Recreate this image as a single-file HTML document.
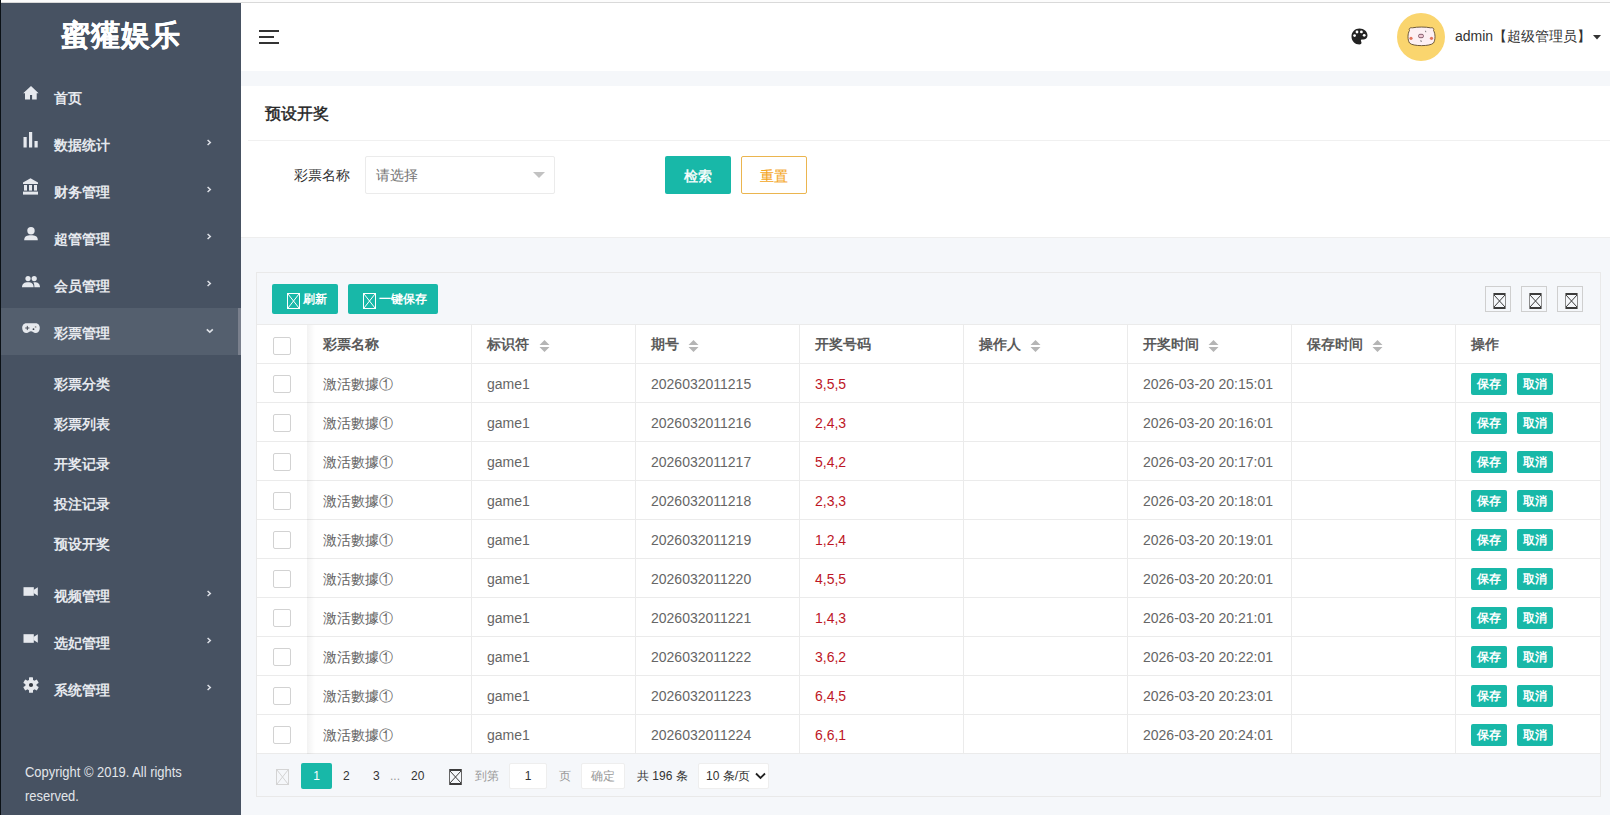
<!DOCTYPE html>
<html><head><meta charset="utf-8">
<style>
*{margin:0;padding:0;box-sizing:border-box;}
html,body{width:1610px;height:815px;overflow:hidden;background:#f5f7fa;font-family:"Liberation Sans",sans-serif;font-size:14px;color:#333;position:relative;}
.abs{position:absolute;}
.t{position:absolute;white-space:nowrap;}
.topline{position:absolute;left:0;top:0;width:1610px;height:3px;background:#fcfcfc;border-bottom:1px solid #d9d9d9;}
.leftline{position:absolute;left:0;top:0;width:1px;height:815px;background:#0b1116;z-index:5;}
.side{position:absolute;left:0;top:3px;width:241px;height:812px;background:#475262;}
.logo{position:absolute;left:0;top:15px;width:241px;height:40px;text-align:center;color:#fff;font-size:29px;line-height:40px;font-weight:bold;letter-spacing:1px;text-indent:1px;}
.mi{position:absolute;left:54px;height:20px;line-height:20px;font-size:14px;font-weight:bold;white-space:nowrap;color:#e6e9ee;}
.header{position:absolute;left:241px;top:3px;width:1369px;height:68px;background:#fff;}
.card1{position:absolute;left:241px;top:86px;width:1369px;height:152px;background:#fff;border-bottom:1px solid #eeeeee;}
.btn{position:absolute;background:#18b8a8;color:#fff;border-radius:2px;text-align:center;white-space:nowrap;}
.tbl{position:absolute;left:256px;top:272px;width:1345px;height:525px;border:1px solid #e9e9e9;background:#f5f7fa;}
.hd{position:absolute;font-weight:bold;color:#5a5a5a;font-size:14px;line-height:20px;white-space:nowrap;}
.cell{position:absolute;color:#666;font-size:14px;line-height:20px;white-space:nowrap;}
.red{color:#bd1626;}
.cb{position:absolute;left:273px;width:18px;height:18px;border:1px solid #d2d2d2;border-radius:2px;background:#fff;}
.sbtn{position:absolute;width:36px;height:22px;line-height:22px;font-size:12px;font-weight:bold;background:#18b8a8;color:#fff;border-radius:2px;text-align:center;}
</style></head>
<body>
<div class="topline"></div>
<div class="side"></div>
<div class="abs" style="left:0;top:308px;width:241px;height:47px;background:#545f6e;"></div>
<div class="abs" style="left:238px;top:308px;width:3px;height:47px;background:#7a808d;"></div>
<div class="logo" style="top:15px;font-weight:bold;-webkit-text-stroke:0.3px #fff;">蜜獾娱乐</div>
<div class="mi" style="top:88px;">首页</div>
<svg class="abs" style="left:23px;top:86px" width="16" height="15" viewBox="0 0 16 15"><path d="M8 0 L15.6 7.2 L13.7 7.2 L13.7 13.6 L9.1 13.6 L9.1 9 L7 9 L7 13.6 L2 13.6 L2 7.2 L0.2 7.2 Z" fill="#e6e9ee"/></svg>
<div class="mi" style="top:135px;">数据统计</div>
<svg class="abs" style="left:23px;top:132px" width="16" height="16" viewBox="0 0 16 16"><rect x="0.5" y="5" width="3.2" height="10.5" fill="#e6e9ee"/><rect x="6" y="0" width="3.2" height="15.5" fill="#e6e9ee"/><rect x="11.5" y="9" width="3.2" height="6.5" fill="#e6e9ee"/></svg>
<svg class="abs" style="left:206px;top:139px" width="7" height="7" viewBox="0 0 7 7"><path d="M1.6 1 L4.3 3.5 L1.6 6" stroke="#dde0e6" stroke-width="1.5" fill="none"/></svg>
<div class="mi" style="top:182px;">财务管理</div>
<svg class="abs" style="left:22px;top:178px" width="17" height="17" viewBox="0 0 17 17"><path d="M8.5 0.3 L16 4.5 L16 6 L1 6 L1 4.5 Z" fill="#e6e9ee"/><rect x="2" y="7" width="3" height="5.6" fill="#e6e9ee"/><rect x="7" y="7" width="3" height="5.6" fill="#e6e9ee"/><rect x="12" y="7" width="3" height="5.6" fill="#e6e9ee"/><rect x="1" y="13.6" width="15" height="3" fill="#e6e9ee"/></svg>
<svg class="abs" style="left:206px;top:186px" width="7" height="7" viewBox="0 0 7 7"><path d="M1.6 1 L4.3 3.5 L1.6 6" stroke="#dde0e6" stroke-width="1.5" fill="none"/></svg>
<div class="mi" style="top:229px;">超管管理</div>
<svg class="abs" style="left:23px;top:227px" width="16" height="14" viewBox="0 0 16 14"><circle cx="8" cy="3.7" r="3.7" fill="#e6e9ee"/><path d="M1.2 13.3 C1.2 9.2 4 8.3 8 8.3 C12 8.3 14.8 9.2 14.8 13.3 Z" fill="#e6e9ee"/></svg>
<svg class="abs" style="left:206px;top:233px" width="7" height="7" viewBox="0 0 7 7"><path d="M1.6 1 L4.3 3.5 L1.6 6" stroke="#dde0e6" stroke-width="1.5" fill="none"/></svg>
<div class="mi" style="top:276px;">会员管理</div>
<svg class="abs" style="left:22px;top:276px" width="19" height="12" viewBox="0 0 19 12"><circle cx="6" cy="2.6" r="2.6" fill="#e6e9ee"/><circle cx="12.2" cy="2.6" r="2.6" fill="#e6e9ee"/><path d="M0 11.3 C0 7.5 2.5 6.2 6 6.2 C9.5 6.2 11.6 7.5 11.6 11.3 Z" fill="#e6e9ee"/><path d="M12.6 6.2 C15.8 6.2 18 7.5 18 11.3 L12.4 11.3 C12.4 9 12.2 7.5 11.2 6.5 Z" fill="#e6e9ee"/></svg>
<svg class="abs" style="left:206px;top:280px" width="7" height="7" viewBox="0 0 7 7"><path d="M1.6 1 L4.3 3.5 L1.6 6" stroke="#dde0e6" stroke-width="1.5" fill="none"/></svg>
<div class="mi" style="top:323px;">彩票管理</div>
<svg class="abs" style="left:22px;top:323px" width="18" height="11" viewBox="0 0 18 11"><path d="M4.5 0.2 L13.5 0.2 C16.5 0.2 17.8 2.5 17.8 5 C17.8 8 16 10 13.5 10 C11.5 10 10.5 8.3 9 8.3 C7.5 8.3 6.5 10 4.5 10 C2 10 0.2 8 0.2 5 C0.2 2.5 1.5 0.2 4.5 0.2 Z" fill="#e6e9ee"/><path d="M3.2 5 L7.4 5 M5.3 2.9 L5.3 7.1" stroke="#3a404a" stroke-width="0.9"/><circle cx="11.5" cy="6.2" r="0.9" fill="#3a404a"/><circle cx="13.6" cy="3.9" r="0.9" fill="#999"/></svg>
<svg class="abs" style="left:206px;top:328px" width="8" height="6" viewBox="0 0 8 6"><path d="M0.8 1.3 L3.8 4.2 L6.8 1.3" stroke="#dde0e6" stroke-width="1.6" fill="none"/></svg>
<div class="mi" style="top:586px;">视频管理</div>
<svg class="abs" style="left:23px;top:587px" width="16" height="10" viewBox="0 0 16 10"><rect x="0.5" y="0.2" width="10.3" height="8.6" fill="#e6e9ee"/><path d="M10.5 3 L14.8 0.2 L14.8 8.8 L10.5 6 Z" fill="#e6e9ee"/></svg>
<svg class="abs" style="left:206px;top:590px" width="7" height="7" viewBox="0 0 7 7"><path d="M1.6 1 L4.3 3.5 L1.6 6" stroke="#dde0e6" stroke-width="1.5" fill="none"/></svg>
<div class="mi" style="top:633px;">选妃管理</div>
<svg class="abs" style="left:23px;top:634px" width="16" height="10" viewBox="0 0 16 10"><rect x="0.5" y="0.2" width="10.3" height="8.6" fill="#e6e9ee"/><path d="M10.5 3 L14.8 0.2 L14.8 8.8 L10.5 6 Z" fill="#e6e9ee"/></svg>
<svg class="abs" style="left:206px;top:637px" width="7" height="7" viewBox="0 0 7 7"><path d="M1.6 1 L4.3 3.5 L1.6 6" stroke="#dde0e6" stroke-width="1.5" fill="none"/></svg>
<div class="mi" style="top:680px;">系统管理</div>
<svg class="abs" style="left:23px;top:677px" width="16" height="16" viewBox="0 0 16 16"><g fill="#e6e9ee"><circle cx="8" cy="8" r="5.6"/><rect x="6" y="0.2" width="4" height="15.6" rx="0.6"/><rect x="6" y="0.2" width="4" height="15.6" rx="0.6" transform="rotate(60 8 8)"/><rect x="6" y="0.2" width="4" height="15.6" rx="0.6" transform="rotate(120 8 8)"/></g><circle cx="8" cy="8" r="2.1" fill="#353a42"/></svg>
<svg class="abs" style="left:206px;top:684px" width="7" height="7" viewBox="0 0 7 7"><path d="M1.6 1 L4.3 3.5 L1.6 6" stroke="#dde0e6" stroke-width="1.5" fill="none"/></svg>
<div class="mi" style="top:374px;">彩票分类</div>
<div class="mi" style="top:414px;">彩票列表</div>
<div class="mi" style="top:454px;">开奖记录</div>
<div class="mi" style="top:494px;">投注记录</div>
<div class="mi" style="top:534px;">预设开奖</div>
<div class="t" style="left:25px;top:760px;font-size:14px;line-height:24px;color:#e3e6ea;transform:scaleX(0.923);transform-origin:0 0;">Copyright © 2019. All rights</div>
<div class="t" style="left:25px;top:784px;font-size:14px;line-height:24px;color:#e3e6ea;transform:scaleX(0.923);transform-origin:0 0;">reserved.</div>
<div class="leftline"></div>
<div class="header"></div>
<div class="abs" style="left:259px;top:30px;width:20px;height:2px;background:#333;"></div>
<div class="abs" style="left:259px;top:36px;width:15px;height:2px;background:#333;"></div>
<div class="abs" style="left:259px;top:42px;width:20px;height:2px;background:#333;"></div>
<svg class="abs" style="left:1351px;top:28px" width="17" height="17" viewBox="0 0 17 17"><path d="M8.5 0.5 C13 0.5 16.5 3.6 16.5 7.5 C16.5 10.3 14.4 11.6 12.4 11.6 L11 11.6 C10.2 11.6 9.7 12.3 9.9 13 C10.1 13.6 10.5 14 10.5 14.8 C10.5 15.8 9.7 16.5 8.5 16.5 C4 16.5 0.5 13 0.5 8.5 C0.5 4 4 0.5 8.5 0.5 Z" fill="#222"/><circle cx="3.6" cy="7.6" r="1.4" fill="#fff"/><circle cx="6" cy="4" r="1.4" fill="#fff"/><circle cx="10.4" cy="3.9" r="1.4" fill="#fff"/><circle cx="13.2" cy="7.3" r="1.4" fill="#fff"/></svg>
<div class="abs" style="left:1397px;top:13px;width:48px;height:48px;border-radius:50%;background:#fad56e;"></div>
<svg class="abs" style="left:1406px;top:26px" width="31" height="21" viewBox="0 0 31 21"><path d="M3.5 4.5 C2.5 2.5 4 1.5 6.5 1.8 C11 0.8 20 0.8 24.5 1.8 C27 1.5 28.5 2.5 27.5 4.5 C29.5 7.5 29.5 14 27.5 17 C24.5 20.5 6.5 20.5 3.5 17 C1.5 14 1.5 7.5 3.5 4.5 Z" fill="#fdf0f3" stroke="#5e4a2e" stroke-width="0.9"/><circle cx="5" cy="12.3" r="1.6" fill="#e3735c"/><circle cx="25.5" cy="12.3" r="1.6" fill="#e3735c"/><rect x="12.6" y="8.3" width="4.8" height="3.4" rx="1.3" fill="#f0c8d2" stroke="#6a4050" stroke-width="0.8"/><path d="M19.5 4.8 L19.8 6.2" stroke="#444" stroke-width="0.7"/><path d="M14.8 14.2 L15.3 16" stroke="#444" stroke-width="0.7"/></svg>
<div class="t" style="left:1455px;top:26px;font-size:14px;line-height:20px;color:#333;">admin【超级管理员】</div>
<svg class="abs" style="left:1593px;top:35px" width="8" height="5" viewBox="0 0 8 5"><path d="M0 0 L8 0 L4 4.5 Z" fill="#333"/></svg>
<div class="card1"></div>
<div class="t" style="left:265px;top:104px;font-size:16px;line-height:20px;color:#222;font-weight:normal;-webkit-text-stroke:0.4px #222;">预设开奖</div>
<div class="abs" style="left:248px;top:140px;width:1362px;height:1px;background:#f0f0f0;"></div>
<div class="t" style="left:294px;top:165px;font-size:14px;line-height:20px;color:#333;">彩票名称</div>
<div class="abs" style="left:365px;top:156px;width:190px;height:38px;border:1px solid #ebebeb;background:#fff;border-radius:2px;"></div>
<div class="t" style="left:376px;top:165px;font-size:14px;line-height:20px;color:#757575;">请选择</div>
<svg class="abs" style="left:533px;top:172px" width="12" height="6" viewBox="0 0 12 6"><path d="M0 0 L12 0 L6 6 Z" fill="#c2c2c2"/></svg>
<div class="btn" style="left:665px;top:156px;width:66px;height:38px;line-height:40px;font-size:14px;-webkit-text-stroke:0.4px #fff;">检索</div>
<div class="abs" style="left:741px;top:156px;width:66px;height:38px;line-height:38px;border:1px solid #ebb54f;border-radius:2px;background:#fff;color:#f4a522;text-align:center;font-size:14px;-webkit-text-stroke:0.1px #f4a522;">重置</div>
<div class="tbl"></div>
<div class="btn" style="left:272px;top:284px;width:66px;height:30px;"></div>
<svg class="abs" style="left:287px;top:293px;" width="13" height="16" viewBox="0 0 13 16"><g shape-rendering="crispEdges"><rect x="0" y="0" width="13" height="1" fill="#fff"/><rect x="0" y="15" width="13" height="1" fill="#fff"/><rect x="0" y="0" width="1" height="16" fill="#fff"/><rect x="12" y="0" width="1" height="16" fill="#fff"/></g><path d="M1 1 L12 15 M12 1 L1 15" stroke="#fff" stroke-width="1"/></svg>
<div class="t" style="left:303px;top:291px;font-size:12px;line-height:16px;color:#fff;font-weight:bold;">刷新</div>
<div class="btn" style="left:348px;top:284px;width:90px;height:30px;"></div>
<svg class="abs" style="left:363px;top:293px;" width="13" height="16" viewBox="0 0 13 16"><g shape-rendering="crispEdges"><rect x="0" y="0" width="13" height="1" fill="#fff"/><rect x="0" y="15" width="13" height="1" fill="#fff"/><rect x="0" y="0" width="1" height="16" fill="#fff"/><rect x="12" y="0" width="1" height="16" fill="#fff"/></g><path d="M1 1 L12 15 M12 1 L1 15" stroke="#fff" stroke-width="1"/></svg>
<div class="t" style="left:379px;top:291px;font-size:12px;line-height:16px;color:#fff;font-weight:bold;">一键保存</div>
<div class="abs" style="left:1485px;top:286px;width:26px;height:26px;border:1px solid #cfcfcf;"></div>
<svg class="abs" style="left:1493px;top:293px;" width="13" height="16" viewBox="0 0 13 16"><g shape-rendering="crispEdges"><rect x="0" y="0" width="13" height="2" fill="#3c3c3c"/><rect x="0" y="14" width="13" height="2" fill="#3c3c3c"/><rect x="0" y="0" width="1" height="16" fill="#8a8a8a"/><rect x="12" y="0" width="1" height="16" fill="#8a8a8a"/></g><path d="M1 2 L12 14 M12 2 L1 14" stroke="#3c3c3c" stroke-width="1"/></svg>
<div class="abs" style="left:1521px;top:286px;width:26px;height:26px;border:1px solid #cfcfcf;"></div>
<svg class="abs" style="left:1529px;top:293px;" width="13" height="16" viewBox="0 0 13 16"><g shape-rendering="crispEdges"><rect x="0" y="0" width="13" height="2" fill="#3c3c3c"/><rect x="0" y="14" width="13" height="2" fill="#3c3c3c"/><rect x="0" y="0" width="1" height="16" fill="#8a8a8a"/><rect x="12" y="0" width="1" height="16" fill="#8a8a8a"/></g><path d="M1 2 L12 14 M12 2 L1 14" stroke="#3c3c3c" stroke-width="1"/></svg>
<div class="abs" style="left:1557px;top:286px;width:26px;height:26px;border:1px solid #cfcfcf;"></div>
<svg class="abs" style="left:1565px;top:293px;" width="13" height="16" viewBox="0 0 13 16"><g shape-rendering="crispEdges"><rect x="0" y="0" width="13" height="2" fill="#3c3c3c"/><rect x="0" y="14" width="13" height="2" fill="#3c3c3c"/><rect x="0" y="0" width="1" height="16" fill="#8a8a8a"/><rect x="12" y="0" width="1" height="16" fill="#8a8a8a"/></g><path d="M1 2 L12 14 M12 2 L1 14" stroke="#3c3c3c" stroke-width="1"/></svg>
<div class="abs" style="left:257px;top:325px;width:1343px;height:429px;background:#fff;"></div>
<div class="abs" style="left:257px;top:324px;width:1343px;height:1px;background:#ebebeb;"></div>
<div class="abs" style="left:257px;top:363px;width:1343px;height:1px;background:#ebebeb;"></div>
<div class="abs" style="left:257px;top:402px;width:1343px;height:1px;background:#ebebeb;"></div>
<div class="abs" style="left:257px;top:441px;width:1343px;height:1px;background:#ebebeb;"></div>
<div class="abs" style="left:257px;top:480px;width:1343px;height:1px;background:#ebebeb;"></div>
<div class="abs" style="left:257px;top:519px;width:1343px;height:1px;background:#ebebeb;"></div>
<div class="abs" style="left:257px;top:558px;width:1343px;height:1px;background:#ebebeb;"></div>
<div class="abs" style="left:257px;top:597px;width:1343px;height:1px;background:#ebebeb;"></div>
<div class="abs" style="left:257px;top:636px;width:1343px;height:1px;background:#ebebeb;"></div>
<div class="abs" style="left:257px;top:675px;width:1343px;height:1px;background:#ebebeb;"></div>
<div class="abs" style="left:257px;top:714px;width:1343px;height:1px;background:#ebebeb;"></div>
<div class="abs" style="left:257px;top:753px;width:1343px;height:1px;background:#ebebeb;"></div>
<div class="abs" style="left:471px;top:325px;width:1px;height:429px;background:#ebebeb;"></div>
<div class="abs" style="left:635px;top:325px;width:1px;height:429px;background:#ebebeb;"></div>
<div class="abs" style="left:799px;top:325px;width:1px;height:429px;background:#ebebeb;"></div>
<div class="abs" style="left:963px;top:325px;width:1px;height:429px;background:#ebebeb;"></div>
<div class="abs" style="left:1127px;top:325px;width:1px;height:429px;background:#ebebeb;"></div>
<div class="abs" style="left:1291px;top:325px;width:1px;height:429px;background:#ebebeb;"></div>
<div class="abs" style="left:1455px;top:325px;width:1px;height:429px;background:#ebebeb;"></div>
<div class="abs" style="left:307px;top:325px;width:8px;height:429px;background:linear-gradient(to right, rgba(0,0,0,0.05), rgba(0,0,0,0));"></div>
<div class="hd" style="left:323px;top:334px;">彩票名称</div>
<div class="hd" style="left:487px;top:334px;">标识符</div>
<div class="hd" style="left:651px;top:334px;">期号</div>
<div class="hd" style="left:815px;top:334px;">开奖号码</div>
<div class="hd" style="left:979px;top:334px;">操作人</div>
<div class="hd" style="left:1143px;top:334px;">开奖时间</div>
<div class="hd" style="left:1307px;top:334px;">保存时间</div>
<div class="hd" style="left:1471px;top:334px;">操作</div>
<svg class="abs" style="left:539px;top:339px" width="11" height="14" viewBox="0 0 11 14"><path d="M0.5 6 L5.5 1 L10.5 6 Z M0.5 8 L5.5 13 L10.5 8 Z" fill="#b5b5b5"/></svg>
<svg class="abs" style="left:688px;top:339px" width="11" height="14" viewBox="0 0 11 14"><path d="M0.5 6 L5.5 1 L10.5 6 Z M0.5 8 L5.5 13 L10.5 8 Z" fill="#b5b5b5"/></svg>
<svg class="abs" style="left:1030px;top:339px" width="11" height="14" viewBox="0 0 11 14"><path d="M0.5 6 L5.5 1 L10.5 6 Z M0.5 8 L5.5 13 L10.5 8 Z" fill="#b5b5b5"/></svg>
<svg class="abs" style="left:1208px;top:339px" width="11" height="14" viewBox="0 0 11 14"><path d="M0.5 6 L5.5 1 L10.5 6 Z M0.5 8 L5.5 13 L10.5 8 Z" fill="#b5b5b5"/></svg>
<svg class="abs" style="left:1372px;top:339px" width="11" height="14" viewBox="0 0 11 14"><path d="M0.5 6 L5.5 1 L10.5 6 Z M0.5 8 L5.5 13 L10.5 8 Z" fill="#b5b5b5"/></svg>
<div class="cb" style="top:337px;"></div>
<div class="cb" style="top:375px;"></div>
<div class="cell" style="left:323px;top:374px;">激活數據①</div>
<div class="cell" style="left:487px;top:374px;">game1</div>
<div class="cell" style="left:651px;top:374px;">2026032011215</div>
<div class="cell red" style="left:815px;top:374px;">3,5,5</div>
<div class="cell" style="left:1143px;top:374px;">2026-03-20 20:15:01</div>
<div class="sbtn" style="left:1471px;top:373px;">保存</div>
<div class="sbtn" style="left:1517px;top:373px;">取消</div>
<div class="cb" style="top:414px;"></div>
<div class="cell" style="left:323px;top:413px;">激活數據①</div>
<div class="cell" style="left:487px;top:413px;">game1</div>
<div class="cell" style="left:651px;top:413px;">2026032011216</div>
<div class="cell red" style="left:815px;top:413px;">2,4,3</div>
<div class="cell" style="left:1143px;top:413px;">2026-03-20 20:16:01</div>
<div class="sbtn" style="left:1471px;top:412px;">保存</div>
<div class="sbtn" style="left:1517px;top:412px;">取消</div>
<div class="cb" style="top:453px;"></div>
<div class="cell" style="left:323px;top:452px;">激活數據①</div>
<div class="cell" style="left:487px;top:452px;">game1</div>
<div class="cell" style="left:651px;top:452px;">2026032011217</div>
<div class="cell red" style="left:815px;top:452px;">5,4,2</div>
<div class="cell" style="left:1143px;top:452px;">2026-03-20 20:17:01</div>
<div class="sbtn" style="left:1471px;top:451px;">保存</div>
<div class="sbtn" style="left:1517px;top:451px;">取消</div>
<div class="cb" style="top:492px;"></div>
<div class="cell" style="left:323px;top:491px;">激活數據①</div>
<div class="cell" style="left:487px;top:491px;">game1</div>
<div class="cell" style="left:651px;top:491px;">2026032011218</div>
<div class="cell red" style="left:815px;top:491px;">2,3,3</div>
<div class="cell" style="left:1143px;top:491px;">2026-03-20 20:18:01</div>
<div class="sbtn" style="left:1471px;top:490px;">保存</div>
<div class="sbtn" style="left:1517px;top:490px;">取消</div>
<div class="cb" style="top:531px;"></div>
<div class="cell" style="left:323px;top:530px;">激活數據①</div>
<div class="cell" style="left:487px;top:530px;">game1</div>
<div class="cell" style="left:651px;top:530px;">2026032011219</div>
<div class="cell red" style="left:815px;top:530px;">1,2,4</div>
<div class="cell" style="left:1143px;top:530px;">2026-03-20 20:19:01</div>
<div class="sbtn" style="left:1471px;top:529px;">保存</div>
<div class="sbtn" style="left:1517px;top:529px;">取消</div>
<div class="cb" style="top:570px;"></div>
<div class="cell" style="left:323px;top:569px;">激活數據①</div>
<div class="cell" style="left:487px;top:569px;">game1</div>
<div class="cell" style="left:651px;top:569px;">2026032011220</div>
<div class="cell red" style="left:815px;top:569px;">4,5,5</div>
<div class="cell" style="left:1143px;top:569px;">2026-03-20 20:20:01</div>
<div class="sbtn" style="left:1471px;top:568px;">保存</div>
<div class="sbtn" style="left:1517px;top:568px;">取消</div>
<div class="cb" style="top:609px;"></div>
<div class="cell" style="left:323px;top:608px;">激活數據①</div>
<div class="cell" style="left:487px;top:608px;">game1</div>
<div class="cell" style="left:651px;top:608px;">2026032011221</div>
<div class="cell red" style="left:815px;top:608px;">1,4,3</div>
<div class="cell" style="left:1143px;top:608px;">2026-03-20 20:21:01</div>
<div class="sbtn" style="left:1471px;top:607px;">保存</div>
<div class="sbtn" style="left:1517px;top:607px;">取消</div>
<div class="cb" style="top:648px;"></div>
<div class="cell" style="left:323px;top:647px;">激活數據①</div>
<div class="cell" style="left:487px;top:647px;">game1</div>
<div class="cell" style="left:651px;top:647px;">2026032011222</div>
<div class="cell red" style="left:815px;top:647px;">3,6,2</div>
<div class="cell" style="left:1143px;top:647px;">2026-03-20 20:22:01</div>
<div class="sbtn" style="left:1471px;top:646px;">保存</div>
<div class="sbtn" style="left:1517px;top:646px;">取消</div>
<div class="cb" style="top:687px;"></div>
<div class="cell" style="left:323px;top:686px;">激活數據①</div>
<div class="cell" style="left:487px;top:686px;">game1</div>
<div class="cell" style="left:651px;top:686px;">2026032011223</div>
<div class="cell red" style="left:815px;top:686px;">6,4,5</div>
<div class="cell" style="left:1143px;top:686px;">2026-03-20 20:23:01</div>
<div class="sbtn" style="left:1471px;top:685px;">保存</div>
<div class="sbtn" style="left:1517px;top:685px;">取消</div>
<div class="cb" style="top:726px;"></div>
<div class="cell" style="left:323px;top:725px;">激活數據①</div>
<div class="cell" style="left:487px;top:725px;">game1</div>
<div class="cell" style="left:651px;top:725px;">2026032011224</div>
<div class="cell red" style="left:815px;top:725px;">6,6,1</div>
<div class="cell" style="left:1143px;top:725px;">2026-03-20 20:24:01</div>
<div class="sbtn" style="left:1471px;top:724px;">保存</div>
<div class="sbtn" style="left:1517px;top:724px;">取消</div>
<svg class="abs" style="left:276px;top:769px;" width="13" height="16" viewBox="0 0 13 16"><g shape-rendering="crispEdges"><rect x="0" y="0" width="13" height="1" fill="#d4d4d4"/><rect x="0" y="15" width="13" height="1" fill="#d4d4d4"/><rect x="0" y="0" width="1" height="16" fill="#d4d4d4"/><rect x="12" y="0" width="1" height="16" fill="#d4d4d4"/></g><path d="M1 1 L12 15 M12 1 L1 15" stroke="#d4d4d4" stroke-width="1"/></svg>
<div class="abs" style="left:301px;top:763px;width:31px;height:26px;background:#18b8a8;border-radius:2px;color:#fff;text-align:center;line-height:26px;font-size:12px;">1</div>
<div class="t" style="left:343px;top:768px;font-size:12px;line-height:16px;color:#333;">2</div>
<div class="t" style="left:373px;top:768px;font-size:12px;line-height:16px;color:#333;">3</div>
<div class="t" style="left:411px;top:768px;font-size:12px;line-height:16px;color:#333;">20</div>
<div class="t" style="left:390px;top:768px;font-size:12px;line-height:16px;color:#999;">...</div>
<svg class="abs" style="left:449px;top:769px;" width="13" height="16" viewBox="0 0 13 16"><g shape-rendering="crispEdges"><rect x="0" y="0" width="13" height="2" fill="#3c3c3c"/><rect x="0" y="14" width="13" height="2" fill="#3c3c3c"/><rect x="0" y="0" width="1" height="16" fill="#666"/><rect x="12" y="0" width="1" height="16" fill="#666"/></g><path d="M1 2 L12 14 M12 2 L1 14" stroke="#3c3c3c" stroke-width="1"/></svg>
<div class="t" style="left:475px;top:768px;font-size:12px;line-height:16px;color:#999;">到第</div>
<div class="abs" style="left:509px;top:763px;width:38px;height:26px;background:#fff;border:1px solid #eee;border-radius:2px;text-align:center;line-height:24px;font-size:12px;color:#333;">1</div>
<div class="t" style="left:559px;top:768px;font-size:12px;line-height:16px;color:#999;">页</div>
<div class="abs" style="left:581px;top:763px;width:44px;height:26px;background:#fff;border:1px solid #eee;border-radius:2px;text-align:center;line-height:24px;font-size:12px;color:#999;">确定</div>
<div class="t" style="left:637px;top:768px;font-size:12px;line-height:16px;color:#333;">共 196 条</div>
<div class="abs" style="left:698px;top:763px;width:71px;height:26px;background:#fff;border:1px solid #eee;border-radius:2px;"></div>
<div class="t" style="left:706px;top:768px;font-size:12px;line-height:16px;color:#333;">10 条/页</div>
<svg class="abs" style="left:755px;top:772px" width="11" height="8" viewBox="0 0 11 8"><path d="M1 1.5 L5.5 6 L10 1.5" stroke="#222" stroke-width="1.8" fill="none"/></svg>
</body></html>
